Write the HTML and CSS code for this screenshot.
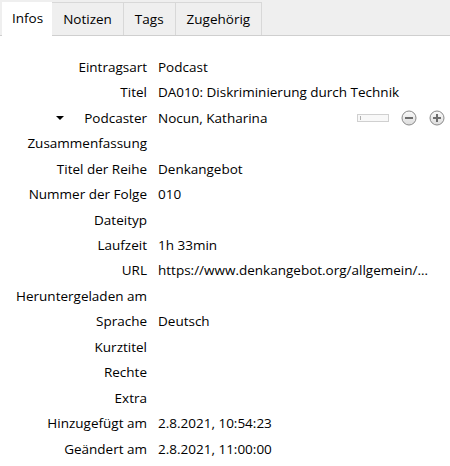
FILE: index.html
```html
<!DOCTYPE html>
<html lang="de">
<head>
    <meta charset="UTF-8">
    <title>Infos</title>
    <link rel="stylesheet" href="styles.css">
</head>
<body>

<div class="tabs">
    <div class="tab active">Infos</div>
    <div class="tab">Notizen</div>
    <div class="tab">Tags</div>
    <div class="tab">Zugehörig</div>
</div>

<div class="info">
    <div class="label">Eintragsart</div><div class="value">Podcast</div>
    <div class="label">Titel</div><div class="value">DA010: Diskriminierung durch Technik</div>
    <div class="label creator"><span class="arrow"></span>Podcaster</div>
    <div class="value creator-row">
        <span>Nocun, Katharina</span>
        <span class="creator-buttons">
            <span class="switch"></span>
            <svg class="btn" width="16" height="16" viewBox="0 0 16 16">
                <defs>
                    <linearGradient id="btnFill" x1="0" y1="0" x2="0" y2="1">
                        <stop offset="0" stop-color="#fafafa"/>
                        <stop offset="1" stop-color="#dcdcdc"/>
                    </linearGradient>
                </defs>
                <circle cx="8" cy="8" r="7" fill="url(#btnFill)" stroke="#8a8a8a"/>
                <rect x="4" y="7" width="8" height="2" fill="#6e6e6e"/>
            </svg>
            <svg class="btn" width="16" height="16" viewBox="0 0 16 16">
                <circle cx="8" cy="8" r="7" fill="url(#btnFill)" stroke="#8a8a8a"/>
                <rect x="4" y="7" width="8" height="2" fill="#6e6e6e"/>
                <rect x="7" y="4" width="2" height="8" fill="#6e6e6e"/>
            </svg>
        </span>
    </div>
    <div class="label">Zusammenfassung</div><div class="value"></div>
    <div class="label">Titel der Reihe</div><div class="value">Denkangebot</div>
    <div class="label">Nummer der Folge</div><div class="value">010</div>
    <div class="label">Dateityp</div><div class="value"></div>
    <div class="label">Laufzeit</div><div class="value">1h 33min</div>
    <div class="label">URL</div><div class="value url">https://www.denkangebot.org/allgemein/da010-diskriminierung-durch-technik/</div>
    <div class="label">Heruntergeladen am</div><div class="value"></div>
    <div class="label">Sprache</div><div class="value">Deutsch</div>
    <div class="label">Kurztitel</div><div class="value"></div>
    <div class="label">Rechte</div><div class="value"></div>
    <div class="label">Extra</div><div class="value"></div>
    <div class="label">Hinzugefügt am</div><div class="value">2.8.2021, 10:54:23</div>
    <div class="label">Geändert am</div><div class="value">2.8.2021, 11:00:00</div>
</div>

</body>
</html>
```

FILE: styles.css
```css
body {
    margin: 0;
    padding: 0;
    font-family: "Open Sans", sans-serif;
    font-size: 13.5px;
    color: #000;
    background: #fff;
    overflow: hidden;
}

.tabs {
    display: flex;
    height: 35px;
    padding-left: 2px;
    background-color: #efefef;
    border-bottom: 1px solid #cfcfcf;
    align-items: flex-end;
}

.tab {
    height: 33px;
    line-height: 32px;
    padding: 0 11px;
    border-right: 1px solid #d8d8d8;
    border-top: 1px solid #d8d8d8;
    box-sizing: border-box;
}

.tab.active {
    background-color: #fff;
    height: 34px;
    margin-bottom: -1px;
    border-top: none;
    border-right: none;
    padding: 0 9px 0 10px;
}

.info {
    display: grid;
    grid-template-columns: 147px 1fr;
    column-gap: 11px;
    grid-auto-rows: 25.47px;
    padding-top: 18px;
    padding-right: 10px;
    align-items: center;
}

.label {
    text-align: right;
    white-space: nowrap;
}

.creator {
    display: flex;
    justify-content: flex-end;
    align-items: center;
}

.arrow {
    width: 0;
    height: 0;
    border-left: 4px solid transparent;
    border-right: 4px solid transparent;
    border-top: 4px solid #000;
    margin-right: auto;
    margin-left: 56px;
}

.value {
    white-space: nowrap;
    overflow: hidden;
    text-overflow: ellipsis;
    min-width: 0;
}

.creator-row {
    display: flex;
    justify-content: space-between;
    align-items: center;
    overflow: visible;
}

.creator-buttons {
    display: flex;
    align-items: center;
    gap: 12px;
    margin-right: -5px;
}

/* little slider for the name field mode */
.switch {
    width: 28px;
    height: 6px;
    border: 1px solid #d0d0d0;
    background: #f8f8f8;
    display: flex;
    align-items: center;
    padding-left: 2px;
    box-sizing: content-box;
}

.switch::before {
    content: "";
    width: 1px;
    height: 4px;
    background: #b0b0b0;
}

.btn {
    display: block;
}

.url {
    padding-right: 4px;
}
```
